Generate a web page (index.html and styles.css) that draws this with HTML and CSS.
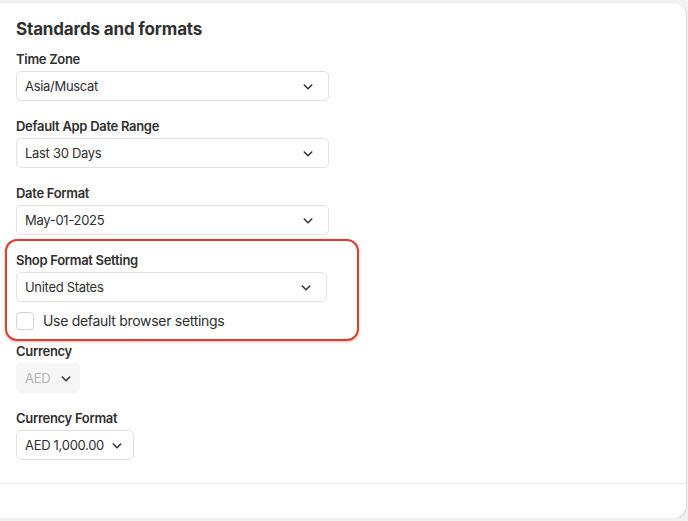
FILE: index.html
```html
<!DOCTYPE html>
<html lang="en">
<head>
<meta charset="utf-8">
<title>Standards and formats</title>
<link rel="stylesheet" href="styles.css">
</head>
<body>
<div class="card">
  <div class="card-body">
    <h2 class="title">Standards and formats</h2>

    <div class="field">
      <div class="label">Time Zone</div>
      <div class="select w-full"><span>Asia/Muscat</span><svg class="chev" viewBox="0 0 20 20"><path d="M5.72 8.47a.75.75 0 0 1 1.06 0l3.22 3.22 3.22-3.22a.75.75 0 1 1 1.06 1.06l-3.75 3.75a.75.75 0 0 1-1.06 0l-3.75-3.75a.75.75 0 0 1 0-1.06Z"/></svg></div>
    </div>

    <div class="field">
      <div class="label">Default App Date Range</div>
      <div class="select w-full"><span>Last 30 Days</span><svg class="chev" viewBox="0 0 20 20"><path d="M5.72 8.47a.75.75 0 0 1 1.06 0l3.22 3.22 3.22-3.22a.75.75 0 1 1 1.06 1.06l-3.75 3.75a.75.75 0 0 1-1.06 0l-3.75-3.75a.75.75 0 0 1 0-1.06Z"/></svg></div>
    </div>

    <div class="field">
      <div class="label">Date Format</div>
      <div class="select w-full"><span>May-01-2025</span><svg class="chev" viewBox="0 0 20 20"><path d="M5.72 8.47a.75.75 0 0 1 1.06 0l3.22 3.22 3.22-3.22a.75.75 0 1 1 1.06 1.06l-3.75 3.75a.75.75 0 0 1-1.06 0l-3.75-3.75a.75.75 0 0 1 0-1.06Z"/></svg></div>
    </div>

    <div class="group highlight">
      <div class="label">Shop Format Setting</div>
      <div class="select w-shop"><span>United States</span><svg class="chev" viewBox="0 0 20 20"><path d="M5.72 8.47a.75.75 0 0 1 1.06 0l3.22 3.22 3.22-3.22a.75.75 0 1 1 1.06 1.06l-3.75 3.75a.75.75 0 0 1-1.06 0l-3.75-3.75a.75.75 0 0 1 0-1.06Z"/></svg></div>
      <label class="check-row"><span class="checkbox"></span><span class="check-text">Use default browser settings</span></label>
    </div>

    <div class="field">
      <div class="label">Currency</div>
      <div class="select compact disabled"><span>AED</span><svg class="chev" viewBox="0 0 20 20"><path d="M5.72 8.47a.75.75 0 0 1 1.06 0l3.22 3.22 3.22-3.22a.75.75 0 1 1 1.06 1.06l-3.75 3.75a.75.75 0 0 1-1.06 0l-3.75-3.75a.75.75 0 0 1 0-1.06Z"/></svg></div>
    </div>

    <div class="field last">
      <div class="label">Currency Format</div>
      <div class="select compact"><span>AED 1,000.00</span><svg class="chev" viewBox="0 0 20 20"><path d="M5.72 8.47a.75.75 0 0 1 1.06 0l3.22 3.22 3.22-3.22a.75.75 0 1 1 1.06 1.06l-3.75 3.75a.75.75 0 0 1-1.06 0l-3.75-3.75a.75.75 0 0 1 0-1.06Z"/></svg></div>
    </div>
  </div>
  <div class="card-footer"></div>
</div>
</body>
</html>
```

FILE: styles.css
```css
* { box-sizing: border-box; }

html, body {
  margin: 0;
  padding: 0;
  background: #f1f1f1;
}

body {
  padding-top: 3px;
  font-family: Inter, "Noto Sans", "Liberation Sans", sans-serif;
  color: #303030;
  -webkit-font-smoothing: antialiased;
}

.card {
  width: 686px;
  height: 515px;
  background: #ffffff;
  border-radius: 0 12px 12px 0;
  box-shadow: 0 1px 2px rgba(0, 0, 0, 0.12), 1px 0 1px rgba(0, 0, 0, 0.06);
  display: flex;
  flex-direction: column;
}

.card-body {
  padding: 14px 16px 23px 16px;
}

.title {
  margin: 0 0 8px 0;
  font-size: 17px;
  line-height: 24px;
  font-weight: 650;
  letter-spacing: -0.15px;
  color: #303030;
}

.field {
  margin-bottom: 15px;
}

.field.last {
  margin-bottom: 0;
}

.label {
  font-size: 13px;
  line-height: 20px;
  font-weight: 600;
  letter-spacing: -0.3px;
  margin-bottom: 2px;
  color: #303030;
}

.select {
  height: 30px;
  border: 1px solid #e1e1e1;
  border-radius: 5px;
  background: #ffffff;
  display: flex;
  align-items: center;
  justify-content: space-between;
  padding: 0 10px 0 8px;
  font-size: 13px;
  letter-spacing: -0.3px;
  color: #303030;
}

.select.w-full { width: 313px; }
.select.w-shop { width: 311px; }

.select.compact {
  display: inline-flex;
  justify-content: flex-start;
  gap: 3px;
  padding-right: 6px;
}

.select.disabled {
  background: #f6f6f6;
  border-color: #f6f6f6;
  color: #b5b5b5;
  width: 64px;
  gap: 6px;
}

.chev {
  width: 20px;
  height: 20px;
  fill: #303030;
  flex: none;
}

.group {
  position: relative;
  margin-bottom: 10px;
}

.group.highlight::before {
  content: "";
  position: absolute;
  left: -11px;
  top: -11px;
  width: 350px;
  height: 98px;
  border: 2px solid #d9402c;
  border-radius: 12px;
  box-shadow: 0 1px 3px rgba(120, 30, 20, 0.3);
  pointer-events: none;
}

.check-row {
  display: flex;
  align-items: center;
  gap: 9px;
  height: 20px;
  margin-top: 9px;
}

.checkbox {
  width: 18px;
  height: 18px;
  border: 1px solid #d4d4d4;
  border-radius: 4px;
  background: #ffffff;
  flex: none;
}

.check-text {
  font-size: 14px;
  line-height: 20px;
  letter-spacing: -0.3px;
  color: #303030;
}

.card-footer {
  border-top: 1px solid #ebebeb;
  flex: 1;
}
```
